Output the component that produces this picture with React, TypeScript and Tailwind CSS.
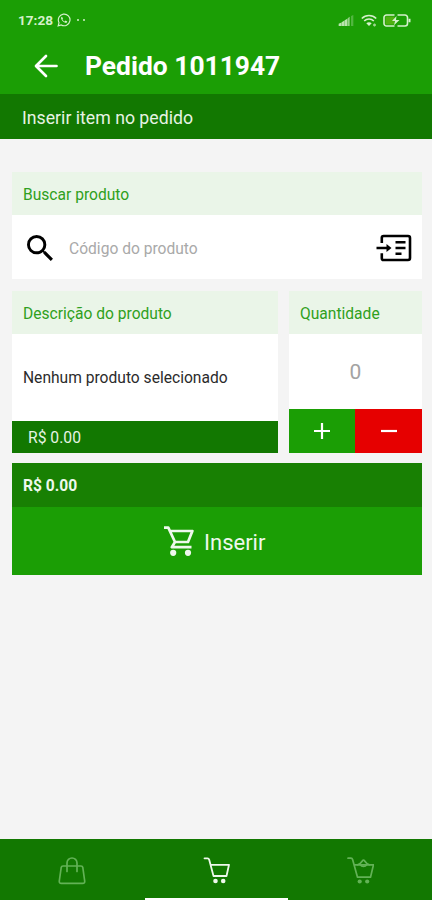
import React from 'react';
import { clsx } from 'clsx';

interface IconProps {
  className?: string;
}

const WhatsAppIcon: React.FC<IconProps> = ({ className }) => (
  <svg viewBox="0 0 24 24" fill="none" stroke="currentColor" className={className}>
    <path strokeWidth="2" d="M2 22l1.5-5.4A10 10 0 1 1 7.300 20.500z" />
    <path fill="currentColor" stroke="none" d="M8.300 6.500c-1.500.8-1.700 2.600-.8 4.300 1.500 3.100 3.900 5.200 7 6.100 1.700.4 3-.6 3.100-2.400l-3-1.600-1.300 1.500c-1.900-.8-3.100-2-4-3.900l1.100-1.300z" />
  </svg>
);

const SignalIcon: React.FC<IconProps> = ({ className }) => (
  <svg viewBox="0 0 16 12" fill="currentColor" className={className}>
    <path d="M0 9.500l3-1.300V12H0zM3.300 8l3-2V12h-3zM6.600 5.800L9.500 4v8H6.600z" opacity=".85" />
    <path opacity=".65" d="M9.800 3.600L12 2v10H9.800z" />
    <path opacity=".3" d="M13.500 1L16 0v12h-2.500z" />
  </svg>
);

const WifiIcon: React.FC<IconProps> = ({ className }) => (
  <svg viewBox="0 0 16 13" fill="none" stroke="currentColor" strokeWidth="1.600" className={className}>
    <path d="M.8 4.500c4-4 10.400-4 14.400 0M3.200 7c2.600-2.600 7-2.600 9.600 0" />
    <path d="M5.300 9.200c1.500-1.400 3.900-1.400 5.400 0L8 12z" fill="currentColor" stroke="none" />
    <path d="M12 11h3M13.500 9.500v3" strokeWidth="1.300" opacity=".7" />
  </svg>
);

const BatteryIcon: React.FC<IconProps> = ({ className }) => (
  <svg viewBox="0 0 28 13" fill="none" className={className}>
    <rect x="2.500" y="2.500" width="9" height="8" fill="#4fb010" />
    <path stroke="currentColor" strokeWidth="1.600" d="M11.500 1H3.500a2.500 2.500 0 0 0-2.500 2.500v6A2.500 2.500 0 0 0 3.500 12h8M14.500 1h7.500a2.500 2.500 0 0 1 2.500 2.500v6a2.500 2.500 0 0 1-2.500 2.500h-7.500" />
    <path fill="currentColor" d="M13.500 2L9 7h3l-1 4.300L16.500 6H13zM25.500 4.800h2v3.500h-2z" />
  </svg>
);

const BackIcon: React.FC<IconProps> = ({ className }) => (
  <svg viewBox="0 0 24 24" fill="none" stroke="currentColor" strokeWidth="2.700" strokeLinecap="round" strokeLinejoin="round" className={className}>
    <path d="M12 2L2 12l10 10M2.500 12H22.500" />
  </svg>
);

const SearchIcon: React.FC<IconProps> = ({ className }) => (
  <svg viewBox="3 3 17.500 17.500" fill="currentColor" className={className}>
    <path d="M15.500 14h-.79l-.28-.27A6.471 6.471 0 0 0 16 9.500 6.500 6.500 0 1 0 9.500 16c1.610 0 3.090-.59 4.230-1.570l.27.28v.79l5 4.990L20.490 19l-4.990-5zm-6 0C7.010 14 5 11.990 5 9.500S7.010 5 9.500 5 14 7.010 14 9.500 11.990 14 9.500 14z" />
  </svg>
);

const ImportIcon: React.FC<IconProps> = ({ className }) => (
  <svg viewBox="0 0 36 28" fill="none" stroke="currentColor" strokeWidth="2.600" className={className}>
    <path d="M5.800 9V3.800Q5.800 2 7.600 2h24.400Q34 2 34 4v20Q34 26 32 26H7.600Q5.800 26 5.800 24.200V19.200" />
    <path d="M.5 14h11M19.500 8.300h10M19.500 14h10M19.500 19.700h6" />
    <path d="M10.500 10L15.500 14l-5 4z" fill="currentColor" stroke="none" />
  </svg>
);

const CartIcon: React.FC<IconProps> = ({ className }) => (
  <svg viewBox="0 0 30 30" fill="none" stroke="currentColor" strokeWidth="2.700" className={className}>
    <path strokeLinejoin="round" d="M0 1.600h4.300L11 16h13L28.400 5H6M11 16l-3.200 5.200h19.700" />
    <circle cx="9.200" cy="26.800" r="3.100" fill="currentColor" stroke="none" />
    <circle cx="24" cy="26.800" r="3.100" fill="currentColor" stroke="none" />
  </svg>
);

const BagIcon: React.FC<IconProps> = ({ className }) => (
  <svg viewBox="0 0 28 28" fill="none" stroke="currentColor" strokeWidth="1.700" strokeLinecap="round" strokeLinejoin="round" className={className}>
    <path d="M5 9h18q1.500 0 1.800 1.500l1.900 13.500q.3 2.300-2 2.300H3.300q-2.300 0-2-2.300L3.200 10.500Q3.500 9 5 9z" />
    <path d="M9 14.500V6a5 5 0 0 1 10 0v8.500" />
  </svg>
);

const NavCartIcon: React.FC<IconProps> = ({ className }) => (
  <svg viewBox="0 0 28 28" fill="none" stroke="currentColor" strokeWidth="1.800" strokeLinecap="round" strokeLinejoin="round" className={className}>
    <path d="M2.500 1.300h3q1.300 0 1.700 1.400L11.500 19h13L27 7.800H8.600" />
    <circle cx="13.500" cy="24" r="2.300" fill="currentColor" stroke="none" />
    <circle cx="21.200" cy="24" r="2.300" fill="currentColor" stroke="none" />
  </svg>
);

const FullCartIcon: React.FC<IconProps> = ({ className }) => (
  <svg viewBox="0 0 28 28" fill="none" stroke="currentColor" strokeWidth="1.700" strokeLinecap="round" strokeLinejoin="round" className={className}>
    <path d="M2 1.200h3q1.200 0 1.600 1.300L11.500 20.200h13L27.500 7.800H8.300" />
    <path d="M11.500 7.800Q14.500 7 16.300 4q1.200-1.600 2.400 0Q20.500 7 23.500 7.800M14.500 7.800a3.200 2.500 0 0 0 6 0" />
    <circle cx="13.700" cy="24.500" r="2.100" fill="currentColor" stroke="none" />
    <circle cx="21.200" cy="24.500" r="2.100" fill="currentColor" stroke="none" />
  </svg>
);

interface PanelProps {
  title: string;
  className?: string;
  children: React.ReactNode;
}

const Panel: React.FC<PanelProps> = ({ title, className, children }) => (
  <section className={clsx('flex flex-col bg-white', className)}>
    <h2 className="flex h-[43px] shrink-0 items-center bg-[#eaf5e8] pt-[5px] pl-[11px] text-[15.600px] text-[#2fa020]">
      {title}
    </h2>
    {children}
  </section>
);

export default function App() {
  return (
    <div className="flex h-[900px] w-[432px] flex-col overflow-hidden bg-[#f4f4f4] font-[Roboto,sans-serif]">
      <header className="h-[94px] shrink-0 bg-[#1b9e05] text-white">
        {/* Status bar */}
        <div className="flex h-10 items-center justify-between pr-[21px] pl-[18px] text-[#d5f0cc]">
          <div className="flex items-center">
            <span className="w-[39px] text-[13.600px] font-bold">17:28</span>
            <WhatsAppIcon className="h-[14px] w-[14px]" />
            <div className="ml-[6px] flex gap-[4px]">
              <span className="h-[2px] w-[2px] rounded-full bg-current" />
              <span className="h-[2px] w-[2px] rounded-full bg-current" />
            </div>
          </div>
          <div className="flex items-center">
            <SignalIcon className="h-[11px] w-4" />
            <WifiIcon className="ml-[7px] h-[13px] w-4" />
            <BatteryIcon className="ml-[6px] h-[13px] w-7" />
          </div>
        </div>

        <div className="flex h-[52px] items-center pl-[34px]">
          <button type="button" aria-label="Voltar" className="pb-px">
            <BackIcon className="h-[24px] w-[24px]" />
          </button>
          <h1 className="ml-[27px] pt-px text-[26.400px] font-bold">Pedido 1011947</h1>
        </div>
      </header>

      <div className="flex h-[45px] shrink-0 items-center bg-[#127801] pt-[3px] pl-[22px] text-[17.700px] text-[#e6f3e3]">
        Inserir item no pedido
      </div>

      <main className="flex flex-1 flex-col pt-[33px] pr-[10px] pl-3">
        <Panel title="Buscar produto">
          <div className="flex h-16 items-center pt-px pr-[10px] pl-[15px] text-black">
            <SearchIcon className="h-[26px] w-[26px]" />
            <span className="ml-4 flex-1 pt-[5px] text-[15.600px] text-[#a9a9a9]">Código do produto</span>
            <ImportIcon className="h-7 w-9" />
          </div>
        </Panel>

        <div className="mt-[12px] flex h-[162px] gap-[11px]">
          <Panel title="Descrição do produto" className="w-[266px]">
            <p className="flex flex-1 items-center pt-[3px] pl-[11px] text-[15.600px] text-[#2b2b2b]">
              Nenhum produto selecionado
            </p>
            <div className="flex h-[32px] items-center bg-[#127801] pt-px pl-4 text-[15.700px] text-[#e6f3e3]">
              R$ 0.00
            </div>
          </Panel>

          <Panel title="Quantidade" className="w-[133px]">
            <div className="flex flex-1 items-center justify-center pt-[3px] text-[21px] text-[#a3a3a3]">0</div>
            <div className="flex h-[44px] text-white">
              <button type="button" aria-label="Adicionar" className="flex w-[66px] items-center justify-center bg-[#1b9e05]">
                <svg viewBox="0 0 16 16" stroke="currentColor" strokeWidth="2.200" className="h-4 w-4">
                  <path d="M0 8h16M8 0v16" />
                </svg>
              </button>
              <button type="button" aria-label="Remover" className="flex flex-1 items-center justify-center bg-[#e60000]">
                <svg viewBox="0 0 16 16" stroke="currentColor" strokeWidth="2.200" className="h-4 w-4">
                  <path d="M0 8h16" />
                </svg>
              </button>
            </div>
          </Panel>
        </div>

        <div className="mt-[10px] flex h-[44px] items-center bg-[#188003] pt-[3px] pl-[11px] text-[15.600px] font-bold text-[#eef8ec]">
          R$ 0.00
        </div>
        <button type="button" className="flex h-[68px] items-center bg-[#1b9e05] pl-[152px] text-[22px] text-[#eef8ec]">
          <CartIcon className="h-[30px] w-[30px]" />
          <span className="ml-[10px] pt-0.5">Inserir</span>
        </button>
      </main>

      <nav className="relative flex h-[61px] shrink-0 bg-[#127801] pt-[18px]">
        <div className="flex flex-1 justify-center text-[#63b256]">
          <BagIcon className="h-7 w-7" />
        </div>
        <div className="flex flex-1 justify-center text-[#eef8ec]">
          <NavCartIcon className="h-7 w-7" />
        </div>
        <div className="flex flex-1 justify-center text-[#63b256]">
          <FullCartIcon className="h-7 w-7" />
        </div>
        {/* Home indicator */}
        <div className="absolute bottom-0 left-[145px] h-[2px] w-[143px] bg-white" />
      </nav>
    </div>
  );
}
